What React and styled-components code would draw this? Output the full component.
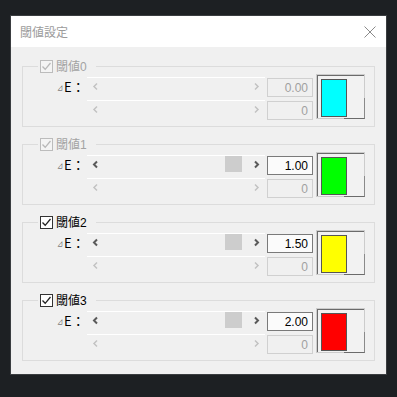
import React from "react";
import styled, { createGlobalStyle } from "styled-components";

const GlobalStyle = createGlobalStyle`
  html, body {
    margin: 0;
    padding: 0;
    background-color: #1d2023;
  }
  body {
    font-family: "Noto Sans CJK JP", "Noto Sans", sans-serif;
  }
`;

const Page = styled.div`
  width: 397px;
  height: 397px;
  padding: 16px 0 0 11px;
  box-sizing: border-box;
`;

const Dialog = styled.div`
  width: 375px;
  background-color: #f0f0f0;
  box-shadow: 0 0 0 1px #3a3d40;
  display: flex;
  flex-direction: column;
`;

const TitleBar = styled.div`
  height: 31px;
  background-color: white;
  display: flex;
  align-items: center;
  justify-content: space-between;
  padding: 0 9px 0 9px;
  box-sizing: border-box;
`;

const Title = styled.div`
  font-size: 12px;
  color: #9b9b9b;
  line-height: 14px;
`;

const Close = styled.div`
  width: 14px;
  height: 14px;
  display: flex;
  align-items: center;
  justify-content: center;
`;

const Content = styled.div`
  padding: 12px 11px 13px 11px;
  display: flex;
  flex-direction: column;
  gap: 10px;
`;

const Group = styled.fieldset`
  margin: 0;
  padding: 1px 9px 6px 0;
  border: 1px solid #dcdcdc;
  min-width: 0;
`;

const Legend = styled.legend`
  margin-left: 15px;
  padding: 0 9px 0 2px;
  height: 14px;
  display: flex;
  align-items: center;
  gap: 3px;
  font-size: 12px;
  line-height: 14px;
  color: ${p => (p.dim ? "#a3a3a3" : "#000")};
`;

const Check = styled.span`
  width: 13px;
  height: 13px;
  box-sizing: border-box;
  border: 1px solid ${p => (p.dim ? "#bcbcbc" : "#333")};
  background-color: ${p => (p.dim ? "#f4f4f4" : "#fff")};
  display: flex;
  align-items: center;
  justify-content: center;
`;

const Digit = styled.span`
  font-family: "Liberation Sans", sans-serif;
  font-size: 12px;
`;

const Body = styled.div`
  display: flex;
  align-items: flex-start;
`;

const Label = styled.div`
  width: 64px;
  box-sizing: border-box;
  padding-left: 34px;
  margin-top: 4px;
  height: 17px;
  display: flex;
  align-items: center;
  font-size: 13px;
  color: #000;
`;

const Tri = styled.span`
  font-size: 6px;
  margin-right: 1px;
  align-self: flex-end;
  margin-bottom: 3px;
  color: #444;
`;

const Bars = styled.div`
  display: flex;
  flex-direction: column;
  gap: 5px;
  margin-top: 3px;
`;

const Bar = styled.div`
  width: 178px;
  height: 18px;
  box-sizing: border-box;
  border-top: 1px solid #ffffff;
  display: flex;
  align-items: center;
`;

const Arrow = styled.div`
  width: 17px;
  height: 17px;
  display: flex;
  align-items: center;
  justify-content: center;
`;

const Track = styled.div`
  flex: 1;
  height: 17px;
  display: flex;
  align-items: flex-start;
  justify-content: flex-end;
  padding-right: 6px;
`;

const Thumb = styled.div`
  width: 17px;
  height: 16px;
  background-color: #cdcdcd;
`;

const Fields = styled.div`
  display: flex;
  flex-direction: column;
  gap: 4px;
  margin: 4px 0 0 2px;
`;

const Field = styled.div`
  width: 46px;
  height: 19px;
  box-sizing: border-box;
  border: 1px solid ${p => (p.active ? "#7a7a7a" : "#d0d0d0")};
  background-color: ${p => (p.active ? "#fbfbfb" : "#f0f0f0")};
  color: ${p => (p.active ? "#000" : "#a0a0a0")};
  font-family: "Liberation Sans", sans-serif;
  font-size: 12px;
  display: flex;
  align-items: center;
  justify-content: flex-end;
  padding-right: 4px;
`;

const ColorButton = styled.div`
  position: relative;
  width: 49px;
  height: 45px;
  box-sizing: border-box;
  margin-left: 3px;
  border: 1px solid #cccccc;
  box-shadow: inset 1px 1px 0 #6b6b6b;
  background-color: #f2f2f2;
  padding: 4px 0 0 4px;
  &::after {
    content: "";
    position: absolute;
    right: -1px;
    bottom: -1px;
    width: 20px;
    height: 20px;
    border-right: 1px solid #8a8a8a;
    border-bottom: 1px solid #6b6b6b;
  }
`;

const Swatch = styled.div`
  width: 26px;
  height: 38px;
  box-sizing: border-box;
  border: 1px solid #555;
  background-color: ${p => p.color};
`;

const Chevron = ({ dir, on }) => (
  <svg width="7" height="9" viewBox="0 0 7 9">
    <path
      d={dir === "left" ? "M5 1.5 L2 4.5 L5 7.5" : "M2 1.5 L5 4.5 L2 7.5"}
      fill="none"
      stroke={on ? "#5a5a5a" : "#c2c2c2"}
      strokeWidth={on ? 2 : 1.5}
    />
  </svg>
);

const Tick = ({ dim }) => (
  <svg width="11" height="11" viewBox="0 0 11 11">
    <path
      d="M1.5 5.5 L4.2 8.3 L9.5 2"
      fill="none"
      stroke={dim ? "#b8b8b8" : "#222"}
      strokeWidth="1.3"
    />
  </svg>
);

const ScrollBar = ({ on }) => (
  <Bar>
    <Arrow>
      <Chevron dir="left" on={on} />
    </Arrow>
    <Track>{on && <Thumb />}</Track>
    <Arrow>
      <Chevron dir="right" on={on} />
    </Arrow>
  </Bar>
);

const thresholds = [
  { id: 0, dim: true, on: false, value: "0.00", color: "#00ffff" },
  { id: 1, dim: true, on: true, value: "1.00", color: "#00ff00" },
  { id: 2, dim: false, on: true, value: "1.50", color: "#ffff00" },
  { id: 3, dim: false, on: true, value: "2.00", color: "#ff0000" },
];

const App = () => {
  return (
    <Page>
      <GlobalStyle />
      <Dialog>
        <TitleBar>
          <Title>閾値設定</Title>
          <Close>
            <svg width="12" height="12" viewBox="0 0 12 12">
              <path d="M0.5 0.5 L11.5 11.5 M11.5 0.5 L0.5 11.5" stroke="#8a8a8a" strokeWidth="1" />
            </svg>
          </Close>
        </TitleBar>
        <Content>
          {thresholds.map(t => (
            <Group key={t.id}>
              <Legend dim={t.dim}>
                <Check dim={t.dim}>
                  <Tick dim={t.dim} />
                </Check>
                <span>
                  閾値<Digit>{t.id}</Digit>
                </span>
              </Legend>
              <Body>
                <Label>
                  <Tri>⊿</Tri>E：
                </Label>
                <Bars>
                  <ScrollBar on={t.on} />
                  <ScrollBar on={false} />
                </Bars>
                <Fields>
                  <Field active={t.on}>{t.value}</Field>
                  <Field active={false}>0</Field>
                </Fields>
                <ColorButton>
                  <Swatch color={t.color} />
                </ColorButton>
              </Body>
            </Group>
          ))}
        </Content>
      </Dialog>
    </Page>
  );
};

export default App;
